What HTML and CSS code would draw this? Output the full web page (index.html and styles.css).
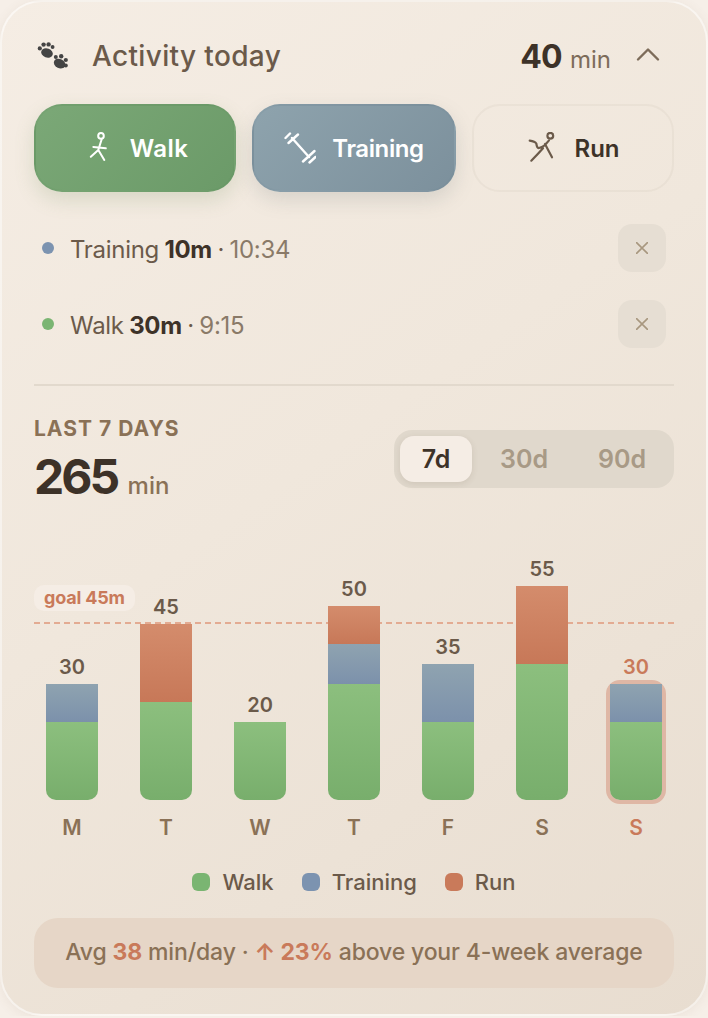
FILE: index.html
```html
<!DOCTYPE html>
<html lang="en">
<head>
    <meta charset="UTF-8">
    <title>Activity today</title>
    <link rel="stylesheet" href="styles.css">
</head>
<body>
<div class="card">
    <div class="header">
        <svg class="paw" viewBox="0 0 36 32" width="36" height="32">
            <g fill="#444">
                <ellipse cx="11" cy="12" rx="6" ry="4.6" transform="rotate(20 11 12)"/>
                <circle cx="3.8" cy="7.4" r="2.1"/>
                <circle cx="7.6" cy="3.6" r="2.2"/>
                <circle cx="12.6" cy="3.4" r="2.2"/>
                <circle cx="16.6" cy="6" r="1.9"/>
                <ellipse cx="23.6" cy="22.6" rx="6" ry="4.6" transform="rotate(25 23.6 22.6)"/>
                <circle cx="19.8" cy="16" r="2"/>
                <circle cx="25.2" cy="15.2" r="2.2"/>
                <circle cx="29.8" cy="19" r="2.1"/>
                <circle cx="29.8" cy="24.4" r="2"/>
            </g>
        </svg>
        <h1 class="title">Activity today</h1>
        <div class="total"><b>40</b> <span>min</span></div>
        <svg class="chevron" viewBox="0 0 24 24" width="24" height="24">
            <path d="M2 15.5 L12 5.5 L22 15.5" fill="none" stroke="#7d6c5a" stroke-width="2.4" stroke-linecap="round" stroke-linejoin="round"/>
        </svg>
    </div>

    <div class="actions">
        <button class="action walk">
            <svg viewBox="0 0 32 32" width="32" height="32" fill="none" stroke="#fff" stroke-width="2" stroke-linecap="round" stroke-linejoin="round">
                <circle cx="19" cy="3.9" r="2.8"/>
                <path d="M19.6 7.5 L16.3 18 M11.3 14.9 L23.8 16.3 M16.3 18 L8.8 24.8 M16.3 18 L22.3 28"/>
            </svg>
            Walk
        </button>
        <button class="action training">
            <svg viewBox="0 0 32 32" width="32" height="32" fill="none" stroke="#fff" stroke-width="2.4" stroke-linecap="round">
                <path d="M8 6 L25 25 M4.5 11 L14 2.5 M1.5 6 L6 1.5 M19 29.5 L30.5 19 M25.5 30.5 L31.5 25"/>
            </svg>
            Training
        </button>
        <button class="action run">
            <svg viewBox="0 0 32 32" width="32" height="32" fill="none" stroke="#6b5a4a" stroke-width="2.2" stroke-linecap="round" stroke-linejoin="round">
                <circle cx="24.3" cy="3.8" r="2.9"/>
                <path d="M3.7 8.7 Q9 9.5 10.3 11.5 Q11 16.5 13 16 Q17 15 19 13 L23 8.4 M19 12 L26 25.3 M17 16.3 Q12 22 5.3 28.7"/>
            </svg>
            Run
        </button>
    </div>

    <ul class="log">
        <li class="log-row">
            <i class="dot dot-training"></i>
            <span class="log-text">Training <b>10m</b> · <em>10:34</em></span>
            <button class="remove">
                <svg viewBox="0 0 12 12" width="12" height="12"><path d="M0.5 0.5 L11.5 11.5 M11.5 0.5 L0.5 11.5" stroke="#a8977f" stroke-width="1.6" stroke-linecap="round"/></svg>
            </button>
        </li>
        <li class="log-row">
            <i class="dot dot-walk"></i>
            <span class="log-text">Walk <b>30m</b> · <em>9:15</em></span>
            <button class="remove">
                <svg viewBox="0 0 12 12" width="12" height="12"><path d="M0.5 0.5 L11.5 11.5 M11.5 0.5 L0.5 11.5" stroke="#a8977f" stroke-width="1.6" stroke-linecap="round"/></svg>
            </button>
        </li>
    </ul>

    <hr class="divider">

    <div class="stats">
        <div class="stats-left">
            <div class="stats-label">LAST 7 DAYS</div>
            <div class="stats-total"><b>265</b> <span>min</span></div>
        </div>
        <div class="range">
            <span class="range-item active">7d</span>
            <span class="range-item">30d</span>
            <span class="range-item">90d</span>
        </div>
    </div>

    <div class="chart">
        <div class="goal-line"></div>
        <div class="goal-tag">goal 45m</div>

        <div class="col">
            <div class="value">30</div>
            <div class="bar-wrap"><div class="bar">
                <div class="seg seg-training" style="height: 38px"></div>
                <div class="seg seg-walk" style="height: 78px"></div>
            </div></div>
        </div>
        <div class="col">
            <div class="value">45</div>
            <div class="bar-wrap"><div class="bar">
                <div class="seg seg-run" style="height: 78px"></div>
                <div class="seg seg-walk" style="height: 98px"></div>
            </div></div>
        </div>
        <div class="col">
            <div class="value">20</div>
            <div class="bar-wrap"><div class="bar">
                <div class="seg seg-walk" style="height: 78px"></div>
            </div></div>
        </div>
        <div class="col">
            <div class="value">50</div>
            <div class="bar-wrap"><div class="bar">
                <div class="seg seg-run" style="height: 38px"></div>
                <div class="seg seg-training" style="height: 40px"></div>
                <div class="seg seg-walk" style="height: 116px"></div>
            </div></div>
        </div>
        <div class="col">
            <div class="value">35</div>
            <div class="bar-wrap"><div class="bar">
                <div class="seg seg-training" style="height: 58px"></div>
                <div class="seg seg-walk" style="height: 78px"></div>
            </div></div>
        </div>
        <div class="col">
            <div class="value">55</div>
            <div class="bar-wrap"><div class="bar">
                <div class="seg seg-run" style="height: 78px"></div>
                <div class="seg seg-walk" style="height: 136px"></div>
            </div></div>
        </div>
        <div class="col today">
            <div class="value">30</div>
            <div class="bar-wrap"><div class="bar">
                <div class="seg seg-training" style="height: 38px"></div>
                <div class="seg seg-walk" style="height: 78px"></div>
            </div></div>
        </div>
    </div>

    <div class="days">
        <span>M</span>
        <span>T</span>
        <span>W</span>
        <span>T</span>
        <span>F</span>
        <span>S</span>
        <span class="today-label">S</span>
    </div>

    <div class="legend">
        <div class="legend-item"><i class="swatch dot-walk"></i>Walk</div>
        <div class="legend-item"><i class="swatch dot-training"></i>Training</div>
        <div class="legend-item"><i class="swatch dot-run"></i>Run</div>
    </div>

    <div class="summary">Avg <b>38</b> min/day · <b>↑ 23%</b> above your 4-week average</div>
</div>
</body>
</html>
```

FILE: styles.css
```css
* {
    padding: 0;
    margin: 0;
    box-sizing: border-box;
}

ul {
    list-style: none;
}

body {
    background: #f6efe8;
    font-family: Inter, "Liberation Sans", sans-serif;
    color: #3d3228;
}

.card {
    width: 708px;
    height: 1016px;
    padding: 32px;
    border: 2px solid rgba(255, 255, 255, 0.55);
    border-radius: 42px;
    background: linear-gradient(145deg, #f5ede4 0%, #f0e7dc 45%, #e8ddd0 100%);
    box-shadow: 0 2px 12px rgba(120, 90, 60, 0.08);
}

/* header */
.header {
    display: flex;
    align-items: center;
    height: 44px;
}

.paw {
    flex: none;
    margin: 2px 20px 0 2px;
}

.title {
    flex: 1;
    font-size: 28px;
    font-weight: 500;
    color: #6b5a4a;
    letter-spacing: 0.35px;
}

.total b {
    font-size: 32px;
    font-weight: 700;
    color: #3d3228;
    letter-spacing: -1px;
}

.total span {
    font-size: 24px;
    color: #7d6c5a;
    margin-left: 4px;
}

.chevron {
    margin: 0 14px 0 25px;
}

/* action buttons */
.actions {
    display: grid;
    grid-template-columns: 202px 204px 202px;
    gap: 16px;
    margin-top: 26px;
}

.action {
    height: 88px;
    display: flex;
    align-items: center;
    justify-content: center;
    gap: 16px;
    border-radius: 28px;
    border: 2px solid transparent;
    font-family: inherit;
    font-size: 24px;
    font-weight: 600;
    color: #fff;
}

.walk {
    background: linear-gradient(135deg, #7ba877, #6b9a68);
    border-color: rgba(90, 140, 90, 0.12);
    box-shadow: 0 8px 20px rgba(110, 140, 90, 0.2);
    letter-spacing: 0.4px;
}

.training {
    background: linear-gradient(135deg, #8ea3ad, #7c909c);
    border-color: rgba(110, 135, 150, 0.12);
    box-shadow: 0 8px 20px rgba(110, 120, 120, 0.2);
    letter-spacing: -0.4px;
}

.run {
    background: transparent;
    border-color: rgba(120, 100, 80, 0.05);
    color: #3d3228;
}

/* log */
.log {
    margin-top: 18px;
}

.log-row {
    display: flex;
    align-items: center;
    padding: 14px 8px;
}

.dot {
    width: 12px;
    height: 12px;
    border-radius: 50%;
    margin-right: 16px;
}

.dot-training {
    background: #7c93b0;
}

.dot-walk {
    background: #7ab572;
}

.dot-run {
    background: #c97a5a;
}

.log-text {
    flex: 1;
    padding-top: 2px;
    font-size: 24px;
    color: #6b5a4a;
    letter-spacing: -0.3px;
    word-spacing: -1px;
}

.log-text b {
    font-weight: 700;
    color: #3d3228;
}

.log-text em {
    font-style: normal;
    color: #8a7a68;
}

.remove {
    width: 48px;
    height: 48px;
    display: flex;
    align-items: center;
    justify-content: center;
    border: 0;
    border-radius: 14px;
    background: #e6ded3;
}

.divider {
    height: 2px;
    margin-top: 22px;
    border: 0;
    background: #e2d9cd;
}

/* last 7 days */
.stats {
    display: flex;
    align-items: center;
    justify-content: space-between;
    margin-top: 26px;
}

.stats-left {
    padding-top: 4px;
}

.stats-label {
    font-size: 21px;
    font-weight: 700;
    color: #8a7156;
    letter-spacing: 1px;
}

.stats-total {
    margin-top: 6px;
}

.stats-total b {
    font-size: 48px;
    font-weight: 700;
    color: #3d3228;
    letter-spacing: -3px;
}

.stats-total span {
    font-size: 24px;
    font-weight: 500;
    color: #8a7156;
    margin-left: 6px;
}

.range {
    display: flex;
    align-items: center;
    width: 280px;
    height: 58px;
    padding: 6px;
    border-radius: 18px;
    background: #e0d8cc;
}

.range-item {
    flex: 1;
    padding-left: 6px;
    line-height: 46px;
    text-align: center;
    font-size: 25px;
    font-weight: 600;
    color: #a89a86;
}

.range-item.active {
    flex: none;
    width: 72px;
    padding-left: 0;
    border-radius: 14px;
    background: #f5ede5;
    color: #3d3228;
    box-shadow: 0 2px 6px rgba(90, 70, 50, 0.12);
}

/* chart */
.chart {
    position: relative;
    display: flex;
    align-items: flex-end;
    gap: 18px;
    height: 280px;
    margin-top: 14px;
}

.goal-line {
    position: absolute;
    left: 0;
    right: 0;
    top: 102px;
    height: 2px;
    background: repeating-linear-gradient(90deg, #e3ab92 0 6px, transparent 6px 10.063px);
}

.goal-tag {
    position: absolute;
    left: 0;
    top: 65px;
    height: 26px;
    padding: 0 10px;
    border-radius: 10px;
    background: #f5ede5;
    font-size: 18px;
    line-height: 26px;
    font-weight: 700;
    color: #c97a5a;
    letter-spacing: -0.2px;
}

.col {
    position: relative;
    flex: 1;
    display: flex;
    flex-direction: column;
    align-items: center;
}

.value {
    line-height: 24px;
    margin-bottom: 5px;
    font-size: 20px;
    font-weight: 600;
    color: #6b5a4a;
}

.bar-wrap {
    position: relative;
}

.bar {
    position: relative;
    width: 52px;
    border-radius: 0 0 10px 10px;
    overflow: hidden;
}

.today .value {
    color: #c97a5a;
}

.today .bar-wrap::before {
    content: "";
    position: absolute;
    inset: -4px;
    border: 4px solid #dfb7a5;
    border-radius: 14px;
}

.seg-walk {
    background: linear-gradient(180deg, #8cbf7e, #78ae6c);
}

.seg-training {
    background: linear-gradient(180deg, #8fa3b0, #7c91ab);
}

.seg-run {
    background: linear-gradient(180deg, #d48c6c, #c77858);
}

.days {
    display: flex;
    gap: 18px;
    margin-top: 14px;
    font-size: 21px;
    line-height: 28px;
    font-weight: 600;
    color: #8a7156;
}

.days span {
    flex: 1;
    text-align: center;
}

.days .today-label {
    color: #c97a5a;
}

.legend {
    display: flex;
    justify-content: center;
    gap: 28px;
    margin-top: 28px;
}

.legend-item {
    display: flex;
    align-items: center;
    gap: 12px;
    font-size: 22px;
    line-height: 24px;
    font-weight: 500;
    color: #6b5a4a;
}

.swatch {
    width: 18px;
    height: 18px;
    border-radius: 6px;
}

.summary {
    height: 70px;
    margin-top: 24px;
    border-radius: 24px;
    background: #e6d6c7;
    font-size: 23px;
    line-height: 68px;
    text-align: center;
    font-weight: 500;
    color: #8a7156;
    letter-spacing: -0.15px;
}

.summary b {
    font-weight: 700;
    color: #c97a5a;
}
```
